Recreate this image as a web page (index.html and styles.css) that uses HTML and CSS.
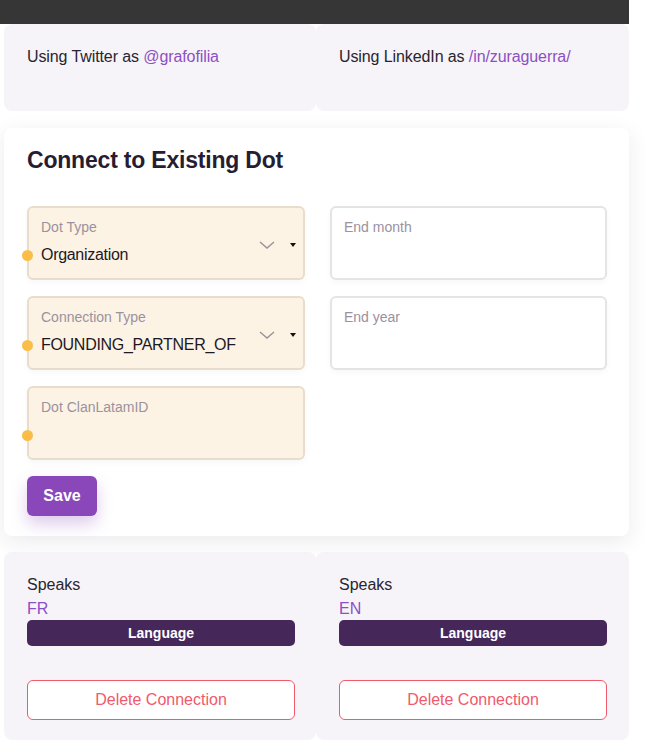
FILE: index.html
```html
<!DOCTYPE html>
<html>
<head>
<meta charset="utf-8">
<link rel="stylesheet" href="styles.css">
</head>
<body>
<div class="page">
  <div class="topbar"></div>
  <div class="row">
    <div class="card top-card"><p class="line">Using Twitter as <span class="link">@grafofilia</span></p></div>
    <div class="card top-card"><p class="line">Using LinkedIn as <span class="link">/in/zuraguerra/</span></p></div>
  </div>
  <div class="panel">
    <h2 class="title">Connect to Existing Dot</h2>
    <div class="grid">
      <div class="field req">
        <span class="dot"></span>
        <div class="label">Dot Type</div>
        <div class="value">Organization</div>
        <svg class="chev" width="16" height="8" viewBox="0 0 16 8"><path d="M1 1 L8 7 L15 1" fill="none" stroke="#9a9299" stroke-width="1.4"/></svg>
        <span class="tri"></span>
      </div>
      <div class="field plain">
        <div class="label">End month</div>
        <div class="value"></div>
      </div>
      <div class="field req">
        <span class="dot"></span>
        <div class="label">Connection Type</div>
        <div class="value">FOUNDING_PARTNER_OF</div>
        <svg class="chev" width="16" height="8" viewBox="0 0 16 8"><path d="M1 1 L8 7 L15 1" fill="none" stroke="#9a9299" stroke-width="1.4"/></svg>
        <span class="tri"></span>
      </div>
      <div class="field plain">
        <div class="label">End year</div>
        <div class="value"></div>
      </div>
      <div class="field req">
        <span class="dot"></span>
        <div class="label">Dot ClanLatamID</div>
        <div class="value"></div>
      </div>
    </div>
    <button class="save">Save</button>
  </div>
  <div class="row bottom-row">
    <div class="card lang-card">
      <div class="speaks">Speaks</div>
      <div class="code">FR</div>
      <div class="tag">Language</div>
      <button class="delete">Delete Connection</button>
    </div>
    <div class="card lang-card">
      <div class="speaks">Speaks</div>
      <div class="code">EN</div>
      <div class="tag">Language</div>
      <button class="delete">Delete Connection</button>
    </div>
  </div>
</div>
</body>
</html>
```
FILE: styles.css
```css
* { box-sizing: border-box; }
body {
  margin: 0;
  background: #ffffff;
  font-family: "Liberation Sans", Arial, sans-serif;
  color: #2a2430;
}
.page { width: 629px; }
.topbar { height: 24px; background: #363636; }
.row {
  display: grid;
  grid-template-columns: 312px 313px;
  padding-left: 4px;
}
.card {
  background: #f6f4f9;
  border-radius: 8px;
  padding: 23px 23px 20px;
}
.top-card { height: 87px; }
.line { margin: 0; font-size: 16px; line-height: 20px; color: #2a2430; letter-spacing: -0.1px; }
.link { color: #8d4fc4; }

.panel {
  margin: 17px 0 16px 4px;
  background: #fff;
  border-radius: 8px;
  padding: 20px 22px 20px 23px;
  box-shadow: 0 6px 22px rgba(40, 30, 60, 0.09);
}
.title {
  margin: 0 0 34px;
  font-size: 23px;
  line-height: 24px;
  font-weight: bold;
  color: #271d33;
  letter-spacing: -0.2px;
}
.grid {
  display: grid;
  grid-template-columns: 278px 277px;
  column-gap: 25px;
  row-gap: 16px;
}
.field {
  position: relative;
  height: 74px;
  border-radius: 6px;
  border: 2px solid #e8ddcc;
  padding: 10px 12px 0 12px;
  box-shadow: 0 3px 6px rgba(0,0,0,0.03);
}
.field.req { background: #fdf3e4; }
.field.plain { background: #fff; border-color: #e5e3e6; }
.label { font-size: 14px; line-height: 18px; color: #9b919f; }
.value { margin-top: 9px; font-size: 16px; line-height: 20px; color: #1e1823; height: 20px; letter-spacing: -0.3px; }
.dot {
  position: absolute;
  left: -7px;
  top: 42px;
  width: 11px;
  height: 11px;
  border-radius: 50%;
  background: #fbbd45;
}
.chev { position: absolute; right: 28px; top: 33px; }
.tri {
  position: absolute;
  right: 7px;
  top: 35px;
  width: 0; height: 0;
  border-left: 3px solid transparent;
  border-right: 3px solid transparent;
  border-top: 4px solid #111;
}
.save {
  margin-top: 16px;
  width: 70px;
  height: 40px;
  border: none;
  border-radius: 6px;
  background: #8947b9;
  color: #fff;
  font-family: "Liberation Sans", Arial, sans-serif;
  font-size: 16px;
  font-weight: bold;
  box-shadow: 0 8px 16px rgba(137, 71, 185, 0.28);
  display: block;
}
.lang-card { height: 188px; padding-top: 23px; }
.speaks { font-size: 16px; line-height: 20px; color: #2a2430; }
.code { font-size: 16px; line-height: 20px; color: #8d4fc4; margin-top: 4px; }
.tag {
  margin-top: 1px;
  height: 26px;
  width: 268px;
  border-radius: 5px;
  background: #46275a;
  color: #fff;
  font-size: 14px;
  font-weight: bold;
  line-height: 26px;
  text-align: center;
}
.delete {
  display: block;
  margin-top: 34px;
  width: 268px;
  height: 40px;
  border: 1px solid #f05a6c;
  border-radius: 6px;
  background: #fff;
  color: #f05a6c;
  font-family: "Liberation Sans", Arial, sans-serif;
  font-size: 16px;
}
```
